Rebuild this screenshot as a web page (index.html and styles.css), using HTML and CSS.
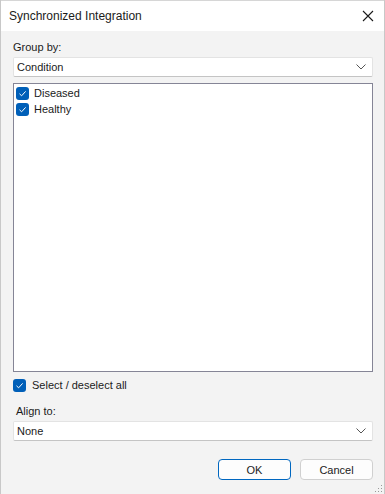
FILE: index.html
```html
<!DOCTYPE html>
<html>
<head>
<meta charset="utf-8">
<link rel="stylesheet" href="styles.css">
</head>
<body>
<div class="window">
  <div class="titlebar">
    <span class="title">Synchronized Integration</span>
    <svg class="close" width="12" height="12" viewBox="0 0 12 12"><path d="M1 1 L11 11 M11 1 L1 11" stroke="#1a1a1a" stroke-width="1.1" fill="none"/></svg>
  </div>
  <div class="content">
    <div class="label">Group by:</div>
    <div class="combo">
      <span>Condition</span>
      <svg class="chev" width="10" height="6" viewBox="0 0 10 6"><path d="M0.5 0.5 L5 5 L9.5 0.5" stroke="#555" stroke-width="1" fill="none"/></svg>
    </div>
    <div class="listbox">
      <div class="item"><span class="check"><svg width="13" height="13" viewBox="0 0 13 13"><path d="M3.5 6.8 L5.6 8.8 L9.6 4.4" stroke="#fff" stroke-width="1" fill="none"/></svg></span>Diseased</div>
      <div class="item"><span class="check"><svg width="13" height="13" viewBox="0 0 13 13"><path d="M3.5 6.8 L5.6 8.8 L9.6 4.4" stroke="#fff" stroke-width="1" fill="none"/></svg></span>Healthy</div>
    </div>
    <div class="selectall"><span class="check"><svg width="13" height="13" viewBox="0 0 13 13"><path d="M3.5 6.8 L5.6 8.8 L9.6 4.4" stroke="#fff" stroke-width="1" fill="none"/></svg></span>Select / deselect all</div>
    <div class="label align">Align to:</div>
    <div class="combo">
      <span>None</span>
      <svg class="chev" width="10" height="6" viewBox="0 0 10 6"><path d="M0.5 0.5 L5 5 L9.5 0.5" stroke="#555" stroke-width="1" fill="none"/></svg>
    </div>
    <div class="buttons">
      <button class="btn primary">OK</button>
      <button class="btn">Cancel</button>
    </div>
    <svg class="grip" width="8" height="8" viewBox="0 0 8 8">
      <rect x="6" y="0" width="1" height="1" fill="#999"/>
      <rect x="3" y="3" width="1" height="1" fill="#999"/>
      <rect x="6" y="3" width="1" height="1" fill="#999"/>
      <rect x="0" y="6" width="1" height="1" fill="#999"/>
      <rect x="3" y="6" width="1" height="1" fill="#999"/>
      <rect x="6" y="6" width="1" height="1" fill="#999"/>
    </svg>
  </div>
</div>
</body>
</html>
```

FILE: styles.css
```css
* { box-sizing: border-box; }
html, body {
  margin: 0;
  padding: 0;
  width: 385px;
  height: 494px;
  overflow: hidden;
  background: #f3f3f3;
}
body {
  font-family: "Segoe UI", "Liberation Sans", Arial, sans-serif;
  font-size: 11px;
  color: #1b1b1b;
}
.window {
  width: 385px;
  height: 494px;
  display: flex;
  flex-direction: column;
  border-left: 1px solid #c8c8c8;
  border-right: 1px solid #c8c8c8;
}
.titlebar {
  height: 31px;
  background: #ffffff;
  display: flex;
  align-items: center;
  justify-content: space-between;
  padding: 0 9px 0 8px;
  border-top: 1px solid #d6d6d6;
}
.title {
  font-size: 12px;
  color: #1b1b1b;
}
.close {
  margin-right: 1px;
}
.content {
  flex: 1;
  background: #f3f3f3;
  padding: 8px 11px 0 12px;
  display: flex;
  flex-direction: column;
  position: relative;
}
.label {
  height: 16px;
  line-height: 16px;
  margin-bottom: 2px;
}
.label.align {
  margin-top: 11px;
  padding-left: 3px;
}
.combo {
  height: 20px;
  background: #ffffff;
  border: 1px solid #e3e3e3;
  border-bottom-color: #c4c4c4;
  border-radius: 2px;
  display: flex;
  align-items: center;
  justify-content: space-between;
  padding: 0 6px 0 3px;
}
.listbox {
  margin-top: 6px;
  height: 289px;
  background: #ffffff;
  border: 1px solid #858596;
  padding: 1px 2px;
}
.item {
  height: 16px;
  display: flex;
  align-items: center;
  gap: 5px;
}
.check {
  width: 13px;
  height: 13px;
  border-radius: 3px;
  background: #005fb8;
  display: inline-flex;
  flex-shrink: 0;
}
.check svg { display: block; }
.selectall {
  margin-top: 6px;
  height: 14px;
  display: flex;
  align-items: center;
  gap: 6px;
}
.buttons {
  margin-top: 18px;
  display: flex;
  justify-content: flex-end;
  gap: 9px;
}
.btn {
  width: 73px;
  height: 21px;
  background: #fdfdfd;
  border: 1px solid #d0d0d0;
  border-radius: 4px;
  font-family: "Segoe UI", "Liberation Sans", Arial, sans-serif;
  font-size: 11px;
  color: #1b1b1b;
  padding: 0;
}
.btn.primary {
  border: 1.5px solid #0067c0;
}
.grip {
  position: absolute;
  right: 1px;
  bottom: 1px;
}
```
